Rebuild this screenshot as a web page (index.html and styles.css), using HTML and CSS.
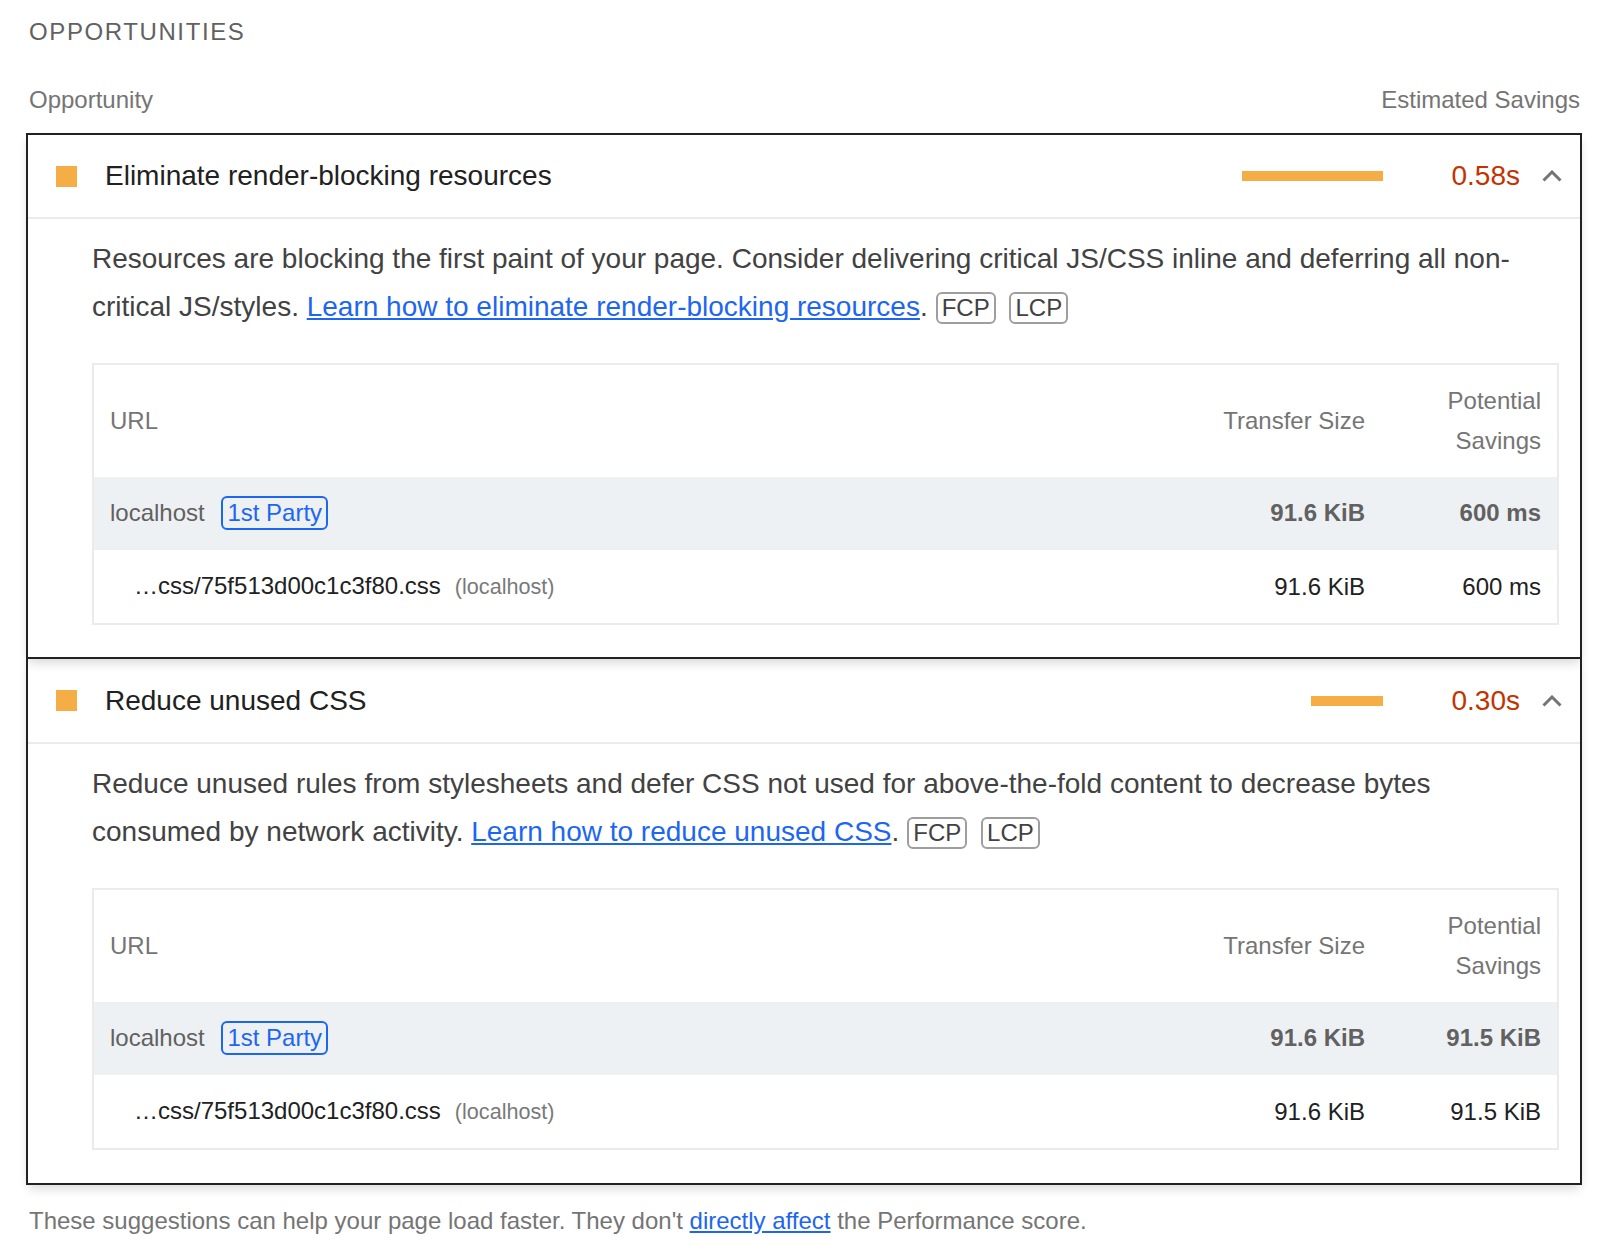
FILE: index.html
```html
<!DOCTYPE html>
<html>
<head>
<meta charset="utf-8">
<title>Opportunities</title>
<link rel="stylesheet" href="styles.css">
</head>
<body>
<div class="page">
  <div class="group-title">Opportunities</div>
  <div class="col-head"><span>Opportunity</span><span>Estimated Savings</span></div>
  <div class="audits">
    <div class="audit">
      <div class="audit-header">
        <span class="score-icon"></span>
        <span class="audit-title">Eliminate render-blocking resources</span>
        <span class="spark"><span class="spark-bar" style="width:141px"></span></span>
        <span class="display-text">0.58s</span>
        <svg class="chevron" viewBox="0 0 20 12" width="20" height="12"><polyline points="1.5,10.5 10,2 18.5,10.5" fill="none" stroke="#757575" stroke-width="3"/></svg>
      </div>
      <div class="audit-body">
        <div class="desc">Resources are blocking the first paint of your page. Consider delivering critical JS/CSS inline and deferring all non-critical JS/styles. <a href="#">Learn how to eliminate render-blocking resources</a>.<span class="adorn first">FCP</span> <span class="adorn">LCP</span></div>
        <table class="tbl">
          <colgroup><col><col class="c2"><col class="c3"></colgroup>
          <thead>
            <tr><th class="l">URL</th><th class="r">Transfer Size</th><th class="r">Potential Savings</th></tr>
          </thead>
          <tbody>
            <tr class="group"><td class="l">localhost <span class="chip">1st Party</span></td><td class="r b">91.6 KiB</td><td class="r b">600 ms</td></tr>
            <tr class="sub"><td class="l sub-url"><span class="url">…css/75f513d00c1c3f80.css</span><span class="host">(localhost)</span></td><td class="r">91.6 KiB</td><td class="r">600 ms</td></tr>
          </tbody>
        </table>
      </div>
    </div>
    <div class="audit">
      <div class="audit-header">
        <span class="score-icon"></span>
        <span class="audit-title">Reduce unused CSS</span>
        <span class="spark"><span class="spark-bar" style="width:72px"></span></span>
        <span class="display-text">0.30s</span>
        <svg class="chevron" viewBox="0 0 20 12" width="20" height="12"><polyline points="1.5,10.5 10,2 18.5,10.5" fill="none" stroke="#757575" stroke-width="3"/></svg>
      </div>
      <div class="audit-body">
        <div class="desc">Reduce unused rules from stylesheets and defer CSS not used for above-the-fold content to decrease bytes consumed by network activity. <a href="#">Learn how to reduce unused CSS</a>.<span class="adorn first">FCP</span> <span class="adorn">LCP</span></div>
        <table class="tbl">
          <colgroup><col><col class="c2"><col class="c3"></colgroup>
          <thead>
            <tr><th class="l">URL</th><th class="r">Transfer Size</th><th class="r">Potential Savings</th></tr>
          </thead>
          <tbody>
            <tr class="group"><td class="l">localhost <span class="chip">1st Party</span></td><td class="r b">91.6 KiB</td><td class="r b">91.5 KiB</td></tr>
            <tr class="sub"><td class="l sub-url"><span class="url">…css/75f513d00c1c3f80.css</span><span class="host">(localhost)</span></td><td class="r">91.6 KiB</td><td class="r">91.5 KiB</td></tr>
          </tbody>
        </table>
      </div>
    </div>
  </div>
  <div class="footer">These suggestions can help your page load faster. They don't <a href="#">directly affect</a> the Performance score.</div>
</div>
</body>
</html>
```

FILE: styles.css
```css
* { box-sizing: border-box; }
html, body { margin: 0; padding: 0; background: #fff; }
body {
  font-family: "Liberation Sans", Arial, Helvetica, sans-serif;
  color: #212121;
}
.page { padding: 12px 22px 0 26px; }
.group-title {
  padding-left: 3px;
  font-size: 24px;
  line-height: 40px;
  letter-spacing: 1.6px;
  text-transform: uppercase;
  color: #616161;
}
.col-head {
  display: flex;
  justify-content: space-between;
  padding: 0 2px 0 3px;
  margin-top: 28px;
  font-size: 24px;
  line-height: 40px;
  color: #757575;
}
.audits { margin-top: 13px; }
.audit {
  border: 2px solid #212121;
  box-shadow: 0 6px 10px -2px rgba(0, 0, 0, 0.15);
}
.audit + .audit { margin-top: -2px; }
.audit-header {
  display: flex;
  align-items: center;
  height: 84px;
  padding: 0 18px 0 28px;
  border-bottom: 2px solid #ebebeb;
}
.audit + .audit .audit-header { height: 85px; }
.score-icon { flex: none; width: 21px; height: 21px; background: #f5ad45; }
.audit-title {
  flex: 1;
  margin-left: 28px;
  font-size: 28px;
  line-height: 48px;
  color: #212121;
}
.spark { flex: none; width: 141px; display: flex; justify-content: flex-end; margin-right: 37px; }
.spark-bar { height: 10px; background: #f5ad45; }
.display-text {
  flex: none;
  width: 100px;
  text-align: right;
  font-size: 28px;
  line-height: 48px;
  color: #c33300;
}
.chevron { flex: none; margin-left: 22px; display: block; }
.audit-body { padding: 16px 21px 32px 64px; }
.audit + .audit .audit-body { padding-bottom: 33px; }
.desc { font-size: 28px; line-height: 48px; color: #424242; }
a { color: #1d66f2; text-decoration: underline; }
.adorn {
  display: inline-block;
  font-size: 24px;
  line-height: 28px;
  padding: 0 4px;
  border: 2px solid #9e9e9e;
  border-radius: 6px;
  margin: 0 3px;
  color: #424242;
}
.adorn.first { margin-left: 8px; }
.tbl {
  margin-top: 32px;
  width: 100%;
  border: 2px solid #ebebeb;
  border-collapse: separate;
  border-spacing: 0;
  table-layout: fixed;
  font-size: 24px;
  line-height: 40px;
}
.tbl col.c2 { width: 220px; }
.tbl col.c3 { width: 176px; }
.tbl th, .tbl td { padding: 16px; vertical-align: middle; }
.tbl tr.group td { padding-bottom: 17px; }
.tbl th { font-weight: normal; color: #757575; }
.tbl .l { text-align: left; }
.tbl .r { text-align: right; white-space: nowrap; }
.tbl th.r { white-space: normal; }
.tbl tr.group td { background: #eef1f4; color: #616161; }
.tbl tr.group td.b { font-weight: bold; }
.tbl tr.sub td { color: #212121; }
.tbl td.sub-url { padding-left: 40px; }
.chip {
  display: inline-block;
  margin-left: 10px;
  padding: 0 4px;
  line-height: 30px;
  border: 2px solid #1d66f2;
  border-radius: 6px;
  color: #1d66f2;
}
.host { margin-left: 14px; font-size: 90%; color: #212121; opacity: 0.6; }
.footer {
  margin-top: 16px;
  padding-left: 3px;
  font-size: 24px;
  line-height: 40px;
  color: #757575;
}
```
